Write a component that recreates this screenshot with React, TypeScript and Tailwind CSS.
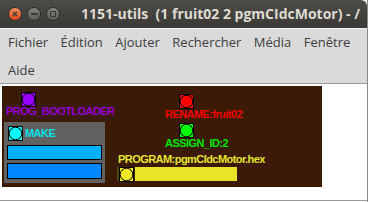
import React from 'react';

const label = "whitespace-pre font-bold text-[11px] leading-none tracking-[-0.55px] font-['Liberation_Sans',Arial,sans-serif]";

function Node({ color, className = '' }: { color: string; className?: string }) {
    return (
        <svg width="15" height="15" viewBox="0 0 15 15" className={'shrink-0 ' + className}>
            <rect x="0.5" y="0.5" width="14" height="14" fill={color} stroke="#000" />
            <circle cx="7.5" cy="7.5" r="6.3" fill={color} stroke="#000" />
        </svg>
    );
}

function WinButton({ kind }: { kind: 'close' | 'min' | 'max' }) {
    const bg = kind === 'close'
        ? 'bg-gradient-to-b from-[#f58a5c] to-[#dd4814]'
        : 'bg-gradient-to-b from-[#85847f] to-[#5c5b57]';
    return (
        <div className={`w-[14px] h-[14px] rounded-full border border-[#2e2d29] flex items-center justify-center ${bg}`}>
            {kind === 'close' && (
                <svg width="8" height="8" viewBox="0 0 8 8"><path d="M2 2L6 6M6 2L2 6" stroke="#3c3b37" strokeWidth="1.4" /></svg>
            )}
            {kind === 'min' && <div className="w-[7px] h-[2px] bg-[#3c3b37]" />}
            {kind === 'max' && <div className="w-[6px] h-[6px] border-[1.5px] border-[#3c3b37]" />}
        </div>
    );
}

const menus = ['Fichier', 'Édition', 'Ajouter', 'Rechercher', 'Média', 'Fenêtre'];

export default function App() {
    return (
        <div className="w-[370px] h-[202px] bg-white overflow-hidden">
            <div className="w-[368px] h-[202px] border-r border-[#8a8a8a] flex flex-col">
                {/* title bar */}
                <div className="h-[28px] rounded-tr-[6px] bg-gradient-to-b from-[#4d4c47] to-[#3a3935] flex items-center overflow-hidden">
                    <div className="flex items-center gap-[5px] pl-[8px]">
                        <WinButton kind="close" />
                        <WinButton kind="min" />
                        <WinButton kind="max" />
                    </div>
                    <div className="ml-[21px] whitespace-pre text-[#dfdbd2] font-bold text-[14px] leading-none font-['Open_Sans',sans-serif]">
                        1151-utils  (1 fruit02 2 pgmCIdcMotor) - /
                    </div>
                </div>

                {/* menu bar */}
                <div className="h-[56px] border-t border-[#f4f4f4] border-b border-b-[#9a9a9a] bg-[#dadada] text-[13px] text-[#3c3c3c] font-['Open_Sans',sans-serif]">
                    <div className="h-[28px] flex items-center pl-[8px] gap-[12.5px]">
                        {menus.map(m => <span key={m}>{m}</span>)}
                    </div>
                    <div className="h-[27px] flex items-center pl-[8px]">
                        <span>Aide</span>
                    </div>
                </div>

                {/* content */}
                <div className="flex-1 bg-white pt-[2px] border-b border-[#9a9a9a]">
                    {/* diagram canvas: node places are the content */}
                    <div className="relative ml-[2px] w-[320px] h-[101px] bg-[#3b1a06]">
                        <div className="absolute left-[4px] top-[6px] flex flex-col">
                            <Node color="#9b00ff" className="ml-[15px]" />
                            <div className={label + ' mt-[-1px] text-[#9400d3]'}>PROG_BOOTLOADER</div>
                        </div>

                        <div className="absolute left-[2px] top-[36px] w-[101px] h-[61px] bg-[#616161] flex flex-col px-[3px] pt-[4px] gap-[3px]">
                            <div className="flex items-start gap-[2px] pl-[1px] h-[16px]">
                                <Node color="#00ffff" />
                                <div className={label + ' mt-[2px] text-[#00e6e6]'}>MAKE</div>
                            </div>
                            <div className="h-[15px] bg-[#00b0ff] border border-black" />
                            <div className="h-[16px] bg-[#0088ff] border border-black" />
                        </div>

                        <div className="absolute left-[163px] top-[8px] flex flex-col">
                            <Node color="#ff0000" className="ml-[14px]" />
                            <div className={label + ' text-[#f50000]'}>RENAME:fruit02</div>
                        </div>

                        <div className="absolute left-[163px] top-[37px] flex flex-col">
                            <Node color="#00ff00" className="ml-[14px]" />
                            <div className={label + ' text-[#00e600]'}>ASSIGN_ID:2</div>
                        </div>

                        <div className="absolute left-[115px] top-[68px] flex flex-col gap-[2px]">
                            <div className={label + ' ml-[1px] text-[#e6e62e]'}>PROGRAM:pgmCIdcMotor.hex</div>
                            <div className="flex h-[14px]">
                                <div className="w-[2px] bg-[#4d4a10]" />
                                <Node color="#f0e628" className="-mb-[1px]" />
                                <div className="ml-[1px] w-[102px] bg-[#e8e428]" />
                            </div>
                        </div>
                    </div>
                </div>
                <div className="h-[1px]" />
            </div>
        </div>
    );
}
